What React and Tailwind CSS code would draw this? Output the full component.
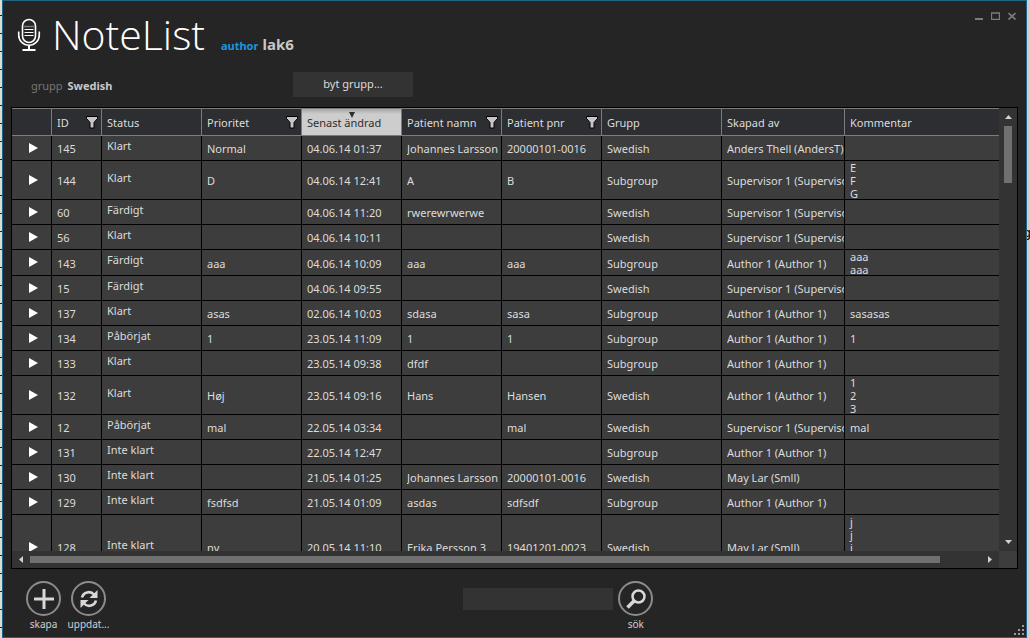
const columns = [
  { key: "id", label: "ID", width: "w-[50px]", filter: true },
  { key: "status", label: "Status", width: "w-[100px]" },
  { key: "prio", label: "Prioritet", width: "w-[100px]", filter: true },
  { key: "changed", label: "Senast ändrad", width: "w-[100px]", sorted: true },
  { key: "patient", label: "Patient namn", width: "w-[100px]", filter: true },
  { key: "pnr", label: "Patient pnr", width: "w-[100px]", filter: true },
  { key: "group", label: "Grupp", width: "w-[120px]" },
  { key: "author", label: "Skapad av", width: "w-[123px]" },
  { key: "comment", label: "Kommentar", width: "" },
];

const SUPERVISOR = "Supervisor 1 (Supervisor 1)";
const AUTHOR = "Author 1 (Author 1)";

const notes = [
  { id: 145, status: "Klart", prio: "Normal", changed: "04.06.14 01:37", patient: "Johannes Larsson", pnr: "20000101-0016", group: "Swedish", author: "Anders Thell (AndersT)" },
  { id: 144, status: "Klart", prio: "D", changed: "04.06.14 12:41", patient: "A", pnr: "B", group: "Subgroup", author: SUPERVISOR, comment: "E\nF\nG" },
  { id: 60, status: "Färdigt", changed: "04.06.14 11:20", patient: "rwerewrwerwe", group: "Swedish", author: SUPERVISOR },
  { id: 56, status: "Klart", changed: "04.06.14 10:11", group: "Swedish", author: SUPERVISOR },
  { id: 143, status: "Färdigt", prio: "aaa", changed: "04.06.14 10:09", patient: "aaa", pnr: "aaa", group: "Subgroup", author: AUTHOR, comment: "aaa\naaa" },
  { id: 15, status: "Färdigt", changed: "04.06.14 09:55", group: "Swedish", author: SUPERVISOR },
  { id: 137, status: "Klart", prio: "asas", changed: "02.06.14 10:03", patient: "sdasa", pnr: "sasa", group: "Subgroup", author: AUTHOR, comment: "sasasas" },
  { id: 134, status: "Påbörjat", prio: "1", changed: "23.05.14 11:09", patient: "1", pnr: "1", group: "Subgroup", author: AUTHOR, comment: "1" },
  { id: 133, status: "Klart", changed: "23.05.14 09:38", patient: "dfdf", group: "Subgroup", author: AUTHOR },
  { id: 132, status: "Klart", prio: "Høj", changed: "23.05.14 09:16", patient: "Hans", pnr: "Hansen", group: "Swedish", author: AUTHOR, comment: "1\n2\n3" },
  { id: 12, status: "Påbörjat", prio: "mal", changed: "22.05.14 03:34", pnr: "mal", group: "Swedish", author: SUPERVISOR, comment: "mal" },
  { id: 131, status: "Inte klart", changed: "22.05.14 12:47", group: "Subgroup", author: AUTHOR },
  { id: 130, status: "Inte klart", changed: "21.05.14 01:25", patient: "Johannes Larsson", pnr: "20000101-0016", group: "Swedish", author: "May Lar (Smll)" },
  { id: 129, status: "Inte klart", prio: "fsdfsd", changed: "21.05.14 01:09", patient: "asdas", pnr: "sdfsdf", group: "Subgroup", author: AUTHOR },
  { id: 128, status: "Inte klart", prio: "ny", changed: "20.05.14 11:10", patient: "Erika Persson 3", pnr: "19401201-0023", group: "Swedish", author: "May Lar (Smll)", comment: "j\nj\nj\nj\nj" },
];

function MicIcon() {
  return (
    <svg width="24" height="34" viewBox="0 0 24 34" fill="none" stroke="#fff" aria-hidden="true">
      <rect x="5.5" y="1.5" width="13" height="23" rx="6.5" strokeWidth="1.6" />
      <path d="M1.7 13.500v3.500a10.300 10.300 0 0 0 20.600 0v-3.500" strokeWidth="1.6" />
      <path d="M12 27.500v4M5.500 32h13" strokeWidth="2" />
      <path d="M7 8.500h10" stroke="#777" strokeWidth="1.500" />
      <path d="M7.500 11.500h9M7.500 14.500h9M7.500 17.500h9" />
    </svg>
  );
}

function FilterIcon() {
  return (
    <svg width="12" height="13" viewBox="0 0 12 13" className="block" aria-hidden="true">
      <path d="M.5 .5h11v2L8 6.500v5.500H4V6.500L.5 2.500z" fill="#c8c4c8" stroke="#000" />
    </svg>
  );
}

function RoundButton({ label, children }) {
  return (
    <button type="button" className="flex w-[45px] flex-col items-center text-[10px] leading-[14px] text-[#d0d0d0]">
      <span className="mb-px flex size-[35px] items-center justify-center rounded-full border-2 border-[#8c8c8c]">
        {children}
      </span>
      {label}
    </button>
  );
}

function WindowButtons() {
  return (
    <div className="flex gap-2 pt-[11px] pr-2.5">
      <button type="button" aria-label="Minimera">
        <svg width="8" height="8" className="block"><path d="M0 7h8" stroke="#7c7c7c" strokeWidth="2" /></svg>
      </button>
      <button type="button" aria-label="Maximera">
        <svg width="9" height="8" className="block"><path d="M.5 1v6.500h8V1M0 1h9" fill="none" stroke="#7c7c7c" strokeWidth="1.300" /></svg>
      </button>
      <button type="button" aria-label="Stäng">
        <svg width="8" height="8" className="block"><path d="M.5 1l7 6.500M7.500 1l-7 6.500" stroke="#7c7c7c" strokeWidth="1.700" /></svg>
      </button>
    </div>
  );
}

function NoteTable() {
  return (
    <table className="w-full table-fixed border-separate border-spacing-0 text-left">
      <colgroup>
        <col className="w-[40px]" />
        {columns.map((c) => (
          <col key={c.key} className={c.width} />
        ))}
      </colgroup>
      <thead>
        <tr className="h-7 bg-[#2d2e32]">
          <th className="border-y border-r border-[#7c7c7c] p-0" aria-label="Öppna" />
          {columns.map((c) => (
            <th
              key={c.key}
              aria-sort={c.sorted ? "descending" : undefined}
              className={`relative border-y border-[#7c7c7c] py-0 pr-[3px] pl-[5px] font-normal whitespace-nowrap ${
                c.key === "comment" ? "" : "border-r"
              } ${c.sorted ? "bg-linear-to-b from-[#a8a8a8] to-[#cdcdcd] to-20% text-[#2d2e32]" : ""}`}
            >
              <div className="flex items-center justify-between">
                <span className="pt-0.5">{c.label}</span>
                {c.filter && (
                  <button type="button" aria-label={`Filtrera ${c.label}`}>
                    <FilterIcon />
                  </button>
                )}
              </div>
              {c.sorted && (
                <svg width="6" height="6" className="absolute top-[3px] left-1/2 -translate-x-1/2" aria-hidden="true">
                  <path d="M0 0h6L3 6z" fill="#2d2e32" />
                </svg>
              )}
            </th>
          ))}
        </tr>
      </thead>
      <tbody>
        {notes.map((note) => (
          <tr key={note.id} className="h-[25px] bg-[#3d3d3d]">
            <td className="pt-0 pb-0.5 pl-[17px] shadow-[inset_-1px_-1px_0_#000]">
              <button type="button" aria-label={`Öppna ${note.id}`} className="block">
                <svg width="9" height="10" className="block">
                  <path d="M0 0l9 5-9 5z" fill="#fff" />
                </svg>
              </button>
            </td>
            {columns.map((c) => (
              <td
                key={c.key}
                className={`py-0 pr-px pl-[5px] ${
                  c.key === "comment" ? "shadow-[inset_0_-1px_0_#000]" : "shadow-[inset_-1px_-1px_0_#000]"
                }`}
              >
                <div
                  className={`${
                    c.key === "comment" ? "leading-[13px] whitespace-pre" : "overflow-hidden leading-[17px] whitespace-nowrap"
                  } ${c.key === "status" ? "pb-[7px]" : ""}`}
                >
                  {note[c.key]}
                </div>
              </td>
            ))}
          </tr>
        ))}
      </tbody>
    </table>
  );
}

export default function App() {
  return (
    <div className="flex h-screen bg-[#cfcfcf] font-['Noto_Sans','Open_Sans',sans-serif] text-[11px] text-[#dcdcdc]">
      {/* sliver of the document behind the window */}
      <div className="w-0.5 bg-[repeating-linear-gradient(#dcdcd4_0_15px,#222_15px_16px,#dcdcd4_16px_18px)]" />

      <main className="relative flex min-w-0 flex-1 flex-col border border-[#1f6385] bg-[#252525]">
        <header className="flex items-start justify-between">
          <div className="flex items-baseline pl-[14px]">
            <span className="self-start pt-[17px]">
              <MicIcon />
            </span>
            <h1 className="pl-[11px] font-['Open_Sans'] text-[41px] leading-[66px] font-light text-white">NoteList</h1>
            <p className="pt-0.5 pl-4 font-bold">
              <span className="text-[#1c97da]">author</span>
              <span className="pl-1 text-[15px] text-[#c8c8c8]">lak6</span>
            </p>
          </div>
          <WindowButtons />
        </header>

        <div className="mt-[5px] flex h-[25px] items-center pl-7">
          <p className="w-[262px] pt-1">
            <span className="text-[#777]">grupp</span> <b className="pl-0.5 text-[#c8c8c8]">Swedish</b>
          </p>
          <button type="button" className="h-[25px] w-[120px] bg-[#333]">
            byt grupp...
          </button>
        </div>

        <section className="mx-2 mt-2.5 flex min-h-0 flex-1 flex-col border border-black bg-[#333]">
          <div className="flex min-h-0 flex-1">
            <div className="min-w-0 flex-1 overflow-hidden">
              <NoteTable />
            </div>
            <div className="flex w-[18px] flex-col items-center py-[7px]" aria-hidden="true">
              <svg width="7" height="4"><path d="M0 4L3.500 0 7 4z" fill="#d0d0d0" /></svg>
              <div className="flex-1 pt-[7px]">
                <div className="h-[57px] w-2 bg-[#707070]" />
              </div>
              <svg width="7" height="4"><path d="M0 0h7L3.500 4z" fill="#d0d0d0" /></svg>
            </div>
          </div>
          <div className="flex h-[17px]" aria-hidden="true">
            <div className="flex flex-1 items-center px-[7px]">
              <svg width="4" height="7"><path d="M4 0v7L0 3.500z" fill="#d0d0d0" /></svg>
              <div className="flex-1 px-[7px]">
                <div className="h-[7px] w-22/23 bg-[#707070]" />
              </div>
              <svg width="4" height="7"><path d="M0 0v7l4-3.500z" fill="#d0d0d0" /></svg>
            </div>
            <div className="w-[18px] bg-[#3d3d3d]" />
          </div>
        </section>

        <footer className="grid h-[68px] grid-cols-[45%_1fr] pt-3">
          <div className="flex items-start pl-[18px]">
            <RoundButton label="skapa">
              <svg width="20" height="20"><path d="M10 0v20M0 10h20" stroke="#d8d8d8" strokeWidth="3" /></svg>
            </RoundButton>
            <RoundButton label="uppdat...">
              <svg width="18" height="18" viewBox="0 0 18 18" fill="none" stroke="#d8d8d8" strokeWidth="2.600">
                <path d="M2 7.500A7 7 0 0 1 14 4.500M16 10.500A7 7 0 0 1 4 13.500" />
                <path d="M17.500 0v8h-8zM.5 18v-8h8z" fill="#d8d8d8" stroke="none" />
              </svg>
            </RoundButton>
          </div>
          <div className="flex items-start">
            <input type="text" aria-label="Sökord" className="mt-[7px] h-[22px] w-[150px] bg-[#333] px-1 outline-none" />
            <RoundButton label="sök">
              <svg width="20" height="20" viewBox="0 0 20 20" fill="none" stroke="#d8d8d8">
                <circle cx="12.500" cy="7.500" r="6" strokeWidth="2.500" />
                <path d="M8 12l-6.500 6.500" strokeWidth="3.500" />
              </svg>
            </RoundButton>
          </div>
        </footer>

        <svg width="10" height="10" className="absolute right-[2px] bottom-[2px]" fill="#9a9a9a" aria-hidden="true">
          {[[8, 0], [4, 4], [8, 4], [0, 8], [4, 8], [8, 8]].map(([x, y]) => (
            <rect key={`${x}-${y}`} x={x} y={y} width="2" height="2" />
          ))}
        </svg>
      </main>

      <div className="w-[3px] overflow-hidden pt-[223px] text-[13px] leading-[18px] text-black">
        <span className="block w-2 -translate-x-1">g</span>
      </div>
    </div>
  );
}
